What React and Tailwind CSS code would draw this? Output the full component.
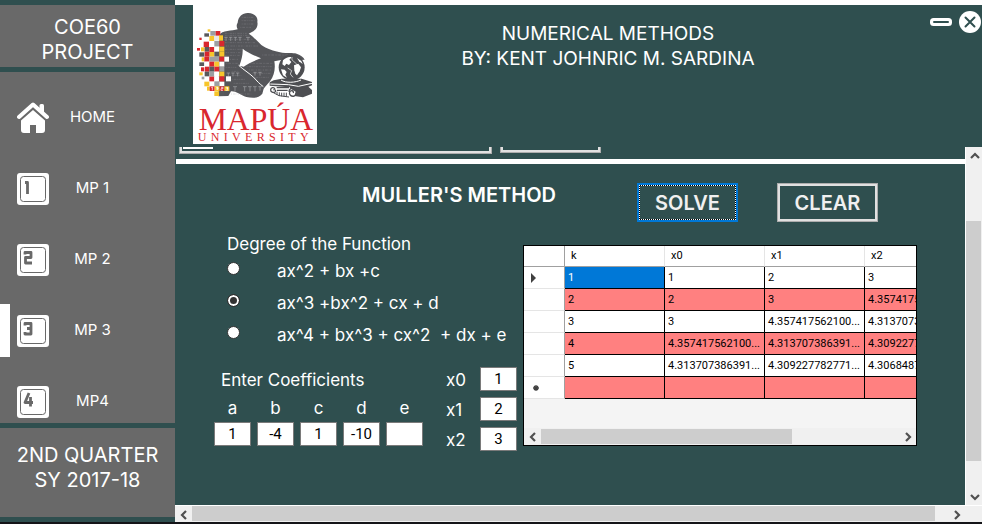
import React from "react";

const NAV = [
  { label: "HOME", icon: "home" },
  { label: "MP 1", icon: "1" },
  { label: "MP 2", icon: "2" },
  { label: "MP 3", icon: "3", active: true },
  { label: "MP4", icon: "4" },
];

const DEGREES = ["ax^2 + bx +c", "ax^3 +bx^2 + cx + d", "ax^4 + bx^3 + cx^2  + dx + e"];

const COEFFICIENTS = [
  ["a", "1"],
  ["b", "-4"],
  ["c", "1"],
  ["d", "-10"],
  ["e", ""],
];

const GUESSES = [
  ["x0", "1"],
  ["x1", "2"],
  ["x2", "3"],
];

const ROWS = [
  ["1", "1", "2", "3"],
  ["2", "2", "3", "4.357417562100..."],
  ["3", "3", "4.357417562100...", "4.313707386391..."],
  ["4", "4.357417562100...", "4.313707386391...", "4.309227782771..."],
  ["5", "4.313707386391...", "4.309227782771...", "4.306848706125..."],
  ["", "", "", ""],
];

// x, y, width, height, fill
const BLOCKS = [
  [98, 88, 8, 7, "#f7c52b"], [88, 100, 14, 10, "#58595b"], [106, 93, 16, 14, "#9d9fa2"], [122, 93, 14, 14, "#d9272e"],
  [73, 113, 7, 7, "#d9272e"], [103, 108, 15, 15, "#f7c52b"], [118, 108, 14, 14, "#e8e8e8"], [132, 106, 12, 16, "#f7c52b"],
  [86, 125, 16, 16, "#d9272e"], [102, 123, 16, 18, "#fff"], [118, 123, 15, 17, "#9d9fa2"], [133, 123, 15, 16, "#d9272e"],
  [66, 144, 9, 8, "#d9272e"], [78, 142, 11, 12, "#f7c52b"], [89, 141, 14, 14, "#58595b"], [103, 141, 15, 15, "#d9272e"], [118, 140, 15, 15, "#fff"], [133, 140, 15, 15, "#f7c52b"],
  [73, 157, 15, 13, "#58595b"], [89, 155, 15, 15, "#d9272e"], [104, 156, 14, 14, "#f7c52b"], [118, 155, 15, 15, "#58595b"], [133, 155, 15, 15, "#f7c52b"],
  [80, 172, 8, 12, "#f7c52b"], [88, 170, 15, 15, "#d9272e"], [103, 170, 30, 15, "#9d9fa2"], [133, 170, 15, 15, "#d9272e"], [148, 170, 14, 15, "#fff"],
  [73, 187, 15, 11, "#58595b"], [88, 185, 15, 15, "#fff"], [103, 185, 15, 15, "#d9272e"], [118, 185, 15, 15, "#f7c52b"], [133, 185, 15, 15, "#fff"],
  [78, 202, 10, 12, "#d9272e"], [90, 200, 13, 15, "#d9272e"], [103, 200, 15, 15, "#58595b"], [118, 200, 15, 15, "#d9272e"], [133, 200, 15, 15, "#9d9fa2"],
  [73, 217, 10, 9, "#f7c52b"], [89, 215, 14, 14, "#58595b"], [103, 215, 15, 15, "#9d9fa2"], [118, 215, 15, 15, "#fff"], [133, 215, 15, 15, "#f7c52b"],
  [80, 230, 8, 8, "#9d9fa2"], [103, 230, 15, 14, "#d9272e"], [118, 230, 15, 15, "#fff"], [133, 229, 15, 16, "#d9272e"], [153, 229, 15, 15, "#fff"],
  [88, 245, 15, 14, "#f7c52b"], [118, 244, 15, 15, "#9d9fa2"], [133, 245, 15, 14, "#fff"],
  [96, 260, 8, 12, "#f7c52b"], [104, 259, 15, 14, "#d9272e"], [119, 259, 15, 14, "#f7c52b"], [134, 259, 14, 14, "#d9272e"], [148, 259, 15, 14, "#f7c52b"],
  [118, 274, 15, 14, "#f7c52b"], [133, 275, 14, 13, "#58595b"],
];

function MapuaLogo() {
  return (
    <svg viewBox="54 15 372 417" className="h-[139px] w-[124px] shrink-0 bg-white" role="img" aria-label="Mapua University">
      <path
        fill="#55565a"
        d="M188 88C184 80 184 74 188 68C190 50 202 39 218 39C236 38 250 50 247 66C250 78 243 88 235 94L221 101C236 110 246 124 259 135C274 146 294 153 322 158C340 160 352 157 365 161C378 166 386 171 389 179L377 180C365 172 345 175 322 179L298 184C302 206 297 228 286 242C278 251 272 258 266 266L262 281C250 297 230 294 214 291C196 284 180 272 168 274L160 288L130 289L133 106C140 90 172 94 188 88Z"
      />
      <g stroke="#9b9ca0" strokeWidth="2" strokeOpacity="0.45" fill="none">
        <path strokeDasharray="5 3 2 4 7 2" d="M150 100H215M150 106H220M146 118H232M150 128H240M152 138H250M150 148H200M152 158H198M150 166H194" />
        <path strokeDasharray="3 3 8 3 2 2" d="M200 72H238M196 82H228M200 62H240M200 52H236M165 178H190M154 190H188M152 202H184M170 214H192M172 226H200M170 238H212M176 250H222M168 282H230M215 200H290M222 210H290M230 220H286M236 232H282M226 190H294M262 165H350" />
      </g>
      <g stroke="#b9babd" strokeWidth="1.500" fill="none">
        <path d="M148 112h10M153 112v11M162 112h10M167 112v11M176 112h10M181 112v11M190 112h10M195 112v11M213 112h12M219 112v10" />
        <path d="M174 260h12M180 260v14M204 260h11M209 260v14M219 260h11M225 260v14M234 260h11M240 260v14M250 260h11M255 260v12" />
        <path d="M155 219h10M160 219v10M169 219h10M174 219v10M183 219h10M188 219v10M235 217h10M240 217v10M250 217h10M255 217v10" />
      </g>
      <path fill="#fff" d="M203 146C215 156 236 166 258 175C240 181 220 191 206 200L193 197C200 180 204 162 203 146Z" />
      <path fill="none" stroke="#fff" strokeWidth="3" d="M191 196C204 208 222 219 236 232C246 243 254 252 265 260" />
      {BLOCKS.map(([x, y, w, h, fill]) => (
        <rect key={`${x}-${y}`} x={x} y={y} width={w} height={h} fill={fill} />
      ))}
      <path stroke="#fff" strokeWidth="2" fill="none" d="M109 263l3-2v10M123 263h6v4h-6M128 261v9M138 262h6v4h-6v5h6M152 262h6v4h-4M158 262v9h-6" />

      <circle cx="350" cy="202" r="39" fill="#4d4e52" />
      <path fill="#fff" d="M324 181C331 173 343 169 350 172L343 179L349 186L342 195L334 191L329 198L322 193Z" />
      <path fill="#fff" d="M357 196L370 191L378 202L374 214L366 226L361 221L358 211Z" />
      <path fill="#fff" d="M318 208L329 209L335 216L331 224L336 233L324 226Z" />
      <path fill="#fff" d="M366 174L379 183L383 192L372 184Z" />
      <path fill="none" stroke="#fff" strokeWidth="2" d="M352 172C346 182 362 186 368 196M338 204L350 212L346 222L354 232" />

      <path fill="#4d4e52" d="M296 241L320 236L380 236L411 246V256L400 260L411 270V281L384 292L358 288L362 275L340 262L284 257V247Z" />
      <path fill="none" stroke="#fff" strokeWidth="3" d="M286 252L340 254L370 259L411 250M318 240C332 250 362 248 378 240" />
      <path fill="#fff" d="M302 262H345V277H306Z" />
      <g fill="none" stroke="#4d4e52" strokeWidth="4">
        <path d="M300 267c-3-6-12-5-13 2c-1 7 8 11 14 6c3-4-2-8-6-5M305 263H342M306 271H338" />
        <path d="M342 275c-1-9 10-13 17-9c9 5 8 18-1 22c-9 3-17-4-14-12c3-6 13-5 11 3" />
        <path strokeWidth="3" d="M295 278L312 287L342 291M306 275v10M313 277v11M320 278v11M327 278v12M334 278v12" />
      </g>

      <text x="71" y="389" fontSize="95" fill="#d9272e" className="font-['Liberation_Serif',serif]">
        MAPÚA
      </text>
      <text x="68" y="424" fontSize="36" fill="#d9272e" className="font-['Liberation_Serif',serif] tracking-[13px]">
        UNIVERSITY
      </text>
    </svg>
  );
}

function HomeIcon() {
  return (
    <svg viewBox="0 0 32 32" className="size-8 shrink-0" aria-hidden="true">
      <path d="M2 15L16 2.500L30 15" fill="none" stroke="#fff" strokeWidth="4" strokeLinecap="round" strokeLinejoin="round" />
      <path d="M22.500 3.500a1.500 1.500 0 0 1 1.500-1.500h1.500a1.500 1.500 0 0 1 1.500 1.500V11l-4.500-4Z" fill="#fff" />
      <path d="M16 8L28 18.500V28a3 3 0 0 1-3 3H19v-8h-6v8H7a3 3 0 0 1-3-3V18.500Z" fill="#fff" />
    </svg>
  );
}

const DIGIT_STROKES = {
  1: "M8 9.500H10.500V21",
  2: "M8 10.500V8.500H14V13.500H8.500V19H15",
  3: "M8 10.500V8.500H14V19H8V17M10 13.500H14",
  4: "M12 7L8 16.500H16M13.500 11V20.500",
};

function KeyIcon({ digit }) {
  return (
    <svg viewBox="0 0 32 32" className="size-8 shrink-0" aria-hidden="true">
      <rect width="32" height="32" rx="3" fill="#fff" />
      <rect x="3.500" y="3.500" width="25" height="25" rx="3" fill="none" stroke="#696969" strokeWidth="1" />
      <path d={DIGIT_STROKES[digit]} fill="none" stroke="#696969" strokeWidth="2.800" strokeLinejoin="round" />
    </svg>
  );
}

const ARROWS = {
  up: "M2 8L6 4L10 8",
  down: "M2 4L6 8L10 4",
  left: "M8 2L4 6L8 10",
  right: "M4 2L8 6L4 10",
};

function ArrowButton({ direction }) {
  return (
    <button type="button" aria-label={`Scroll ${direction}`} className="flex size-[17px] shrink-0 items-center justify-center">
      <svg viewBox="0 0 12 12" className="size-3" aria-hidden="true">
        <path d={ARROWS[direction]} fill="none" stroke="#505050" strokeWidth="2.200" />
      </svg>
    </button>
  );
}

function Sidebar() {
  return (
    <aside className="flex w-[175px] shrink-0 flex-col gap-[5px] bg-[#2f4f4f] py-[5px]">
      <h2 className="h-[62px] bg-[#696969] pt-[10px] text-center text-[20px] leading-[25px]">
        COE60
        <br />
        PROJECT
      </h2>
      <nav className="flex min-h-0 flex-1 flex-col gap-[18px] overflow-hidden bg-[#696969] pt-[19px]">
        {NAV.map(({ label, icon, active }) => (
          <button
            key={label}
            type="button"
            className={`flex h-[53px] shrink-0 items-center border-l-10 pl-[7px] text-[15px] ${active ? "border-white" : "border-transparent"}`}
          >
            {icon === "home" ? <HomeIcon /> : <KeyIcon digit={icon} />}
            <span className="w-[87px] text-center">{label}</span>
          </button>
        ))}
      </nav>
      <p className="h-[89px] bg-[#696969] pt-[15px] text-center text-[20px] leading-[25px]">
        2ND QUARTER
        <br />
        SY 2017-18
      </p>
    </aside>
  );
}

function Header() {
  return (
    <header className="flex h-[142px] shrink-0 pl-[18px]">
      <MapuaLogo />
      <h1 className="flex-1 pt-4 text-center text-[19px] leading-[25px]">
        NUMERICAL METHODS
        <br />
        BY: KENT JOHNRIC M. SARDINA
      </h1>
      <div className="flex h-[34px] w-[83px] items-center justify-end gap-[7px] pr-px">
        <button type="button" aria-label="Minimize">
          <svg viewBox="0 0 22 8" className="h-2 w-[22px]" aria-hidden="true">
            <rect width="22" height="8" rx="3.500" fill="#fff" />
            <rect x="3" y="3" width="16" height="2" rx="1" fill="#2f4f4f" />
          </svg>
        </button>
        <button type="button" aria-label="Close">
          <svg viewBox="0 0 22 22" className="size-[22px]" aria-hidden="true">
            <circle cx="11" cy="11" r="11" fill="#fff" />
            <path d="M6.500 6.500L15.500 15.500M15.500 6.500L6.500 15.500" stroke="#2f4f4f" strokeWidth="2" strokeLinecap="round" />
          </svg>
        </button>
      </div>
    </header>
  );
}

function MethodForm() {
  return (
    <form className="w-[303px] shrink-0 text-[17px]">
      <fieldset className="pl-[13px]">
        <legend className="h-[23px] leading-[25px]">Degree of the Function</legend>
        {DEGREES.map((text, i) => (
          <label key={text} className="flex h-8 items-start gap-[37px] pt-[7px] leading-[18px] whitespace-pre">
            <input
              type="radio"
              name="degree"
              defaultChecked={i === 1}
              className="size-[13px] shrink-0 appearance-none rounded-full border border-[#333333] bg-white checked:bg-[#333333] checked:shadow-[inset_0_0_0_2px_white]"
            />
            {text}
          </label>
        ))}
      </fieldset>
      <div className="mt-4 flex justify-between">
        <fieldset>
          <legend className="h-[27px] pl-[7px] leading-[27px]">Enter Coefficients</legend>
          <div className="flex gap-[6px]">
            {COEFFICIENTS.map(([name, value]) => (
              <label key={name} className="flex w-[37px] flex-col text-center">
                <span className="h-7 leading-7">{name}</span>
                <input
                  defaultValue={value}
                  className="h-6 w-full border border-[#7a7a7a] bg-white text-center font-['Roboto',sans-serif] text-[15px] text-black"
                />
              </label>
            ))}
          </div>
        </fieldset>
        <div className="flex flex-col gap-[6px]">
          {GUESSES.map(([name, value]) => (
            <label key={name} className="flex h-6 w-[71px] items-center justify-between">
              <span className="pt-1">{name}</span>
              <input
                defaultValue={value}
                className="h-6 w-[37px] border border-[#7a7a7a] bg-white text-center font-['Roboto',sans-serif] text-[15px] text-black"
              />
            </label>
          ))}
        </div>
      </div>
    </form>
  );
}

function cellColor(row, col) {
  if (row === 0 && col === 0) return "bg-[#0078d7] text-white";
  return row % 2 ? "bg-[#ff8080]" : "bg-white";
}

function ResultGrid() {
  return (
    <div className="mt-[13px] mr-12 ml-[6px] h-[201px] min-w-0 flex-1 overflow-hidden border border-black bg-[#f4f4f4] text-black">
      <div className="flex h-full flex-col">
        <div className="min-h-0 flex-1 overflow-hidden">
          <table className="w-[441px] table-fixed border-separate border-spacing-0 bg-white font-['Roboto',sans-serif] text-[11px] leading-[21px]">
            <thead>
              <tr className="h-[21px]">
                <th className="w-[41px] border-r border-b border-[#a0a0a0] p-0" />
                {["k", "x0", "x1", "x2"].map((name) => (
                  <th key={name} className="w-[100px] border-r border-b border-r-[#e5e5e5] border-b-[#a0a0a0] p-0 pl-[6px] text-left leading-5 font-normal">
                    {name}
                  </th>
                ))}
              </tr>
            </thead>
            <tbody>
              {ROWS.map((cells, row) => (
                <tr key={row} className="h-[22px]">
                  <th className="border-r border-b border-r-[#a0a0a0] border-b-[#e5e5e5] p-0">
                    {row === 0 && (
                      <svg viewBox="0 0 5 10" className="ml-[7px] h-[10px] w-[5px]" aria-hidden="true">
                        <path d="M0 0L5 5L0 10Z" fill="#404040" />
                      </svg>
                    )}
                    {row === 5 && (
                      <svg viewBox="0 0 6 6" className="ml-[9px] size-[6px]" aria-hidden="true">
                        <path d="M3 0V6M0 3H6M1 1L5 5M5 1L1 5" stroke="#404040" strokeWidth="1.300" />
                      </svg>
                    )}
                  </th>
                  {cells.map((text, col) => (
                    <td key={col} className={`border-r border-b border-black p-0 pl-[3px] whitespace-nowrap ${cellColor(row, col)}`}>
                      {text}
                    </td>
                  ))}
                </tr>
              ))}
            </tbody>
          </table>
        </div>
        <div className="flex h-[17px] shrink-0 bg-[#f0f0f0]">
          <ArrowButton direction="left" />
          <div className="flex flex-1 py-px">
            <div className="w-[70%] bg-[#cdcdcd]" />
          </div>
          <ArrowButton direction="right" />
        </div>
      </div>
    </div>
  );
}

function Workspace() {
  return (
    <div className="flex min-h-0 min-w-0 flex-1 flex-col overflow-hidden pl-px">
      <div className="flex h-3 shrink-0 items-start gap-2 pl-[3px]">
        <div className="h-[7px] w-[313px] border border-t-0 border-[#adadad]">
          <div className="h-[6px] border-2 border-t-0 border-[#e1e1e1] pl-px">
            <div className="h-[2px] w-[30px] bg-white" />
          </div>
        </div>
        <div className="h-[6px] w-[101px] border border-t-0 border-[#adadad]">
          <div className="h-[5px] border-2 border-t-0 border-[#e1e1e1]" />
        </div>
      </div>
      <div className="h-[5px] shrink-0 bg-white" />
      <div className="flex items-start justify-end pt-[19px] pr-[87px] text-[20px] font-semibold">
        <h2 className="mr-[81px] leading-6">MULLER'S METHOD</h2>
        <button type="button" className="mr-[39px] h-[39px] w-[101px] border-2 border-[#0078d7] text-[#f0f0f0]">
          <span className="flex h-full border border-dotted border-white bg-black">
            <span className="flex flex-1 items-center justify-center bg-[#2f4f4f]">SOLVE</span>
          </span>
        </button>
        <button type="button" className="h-[39px] w-[101px] border border-[#adadad] text-[#f0f0f0]">
          <span className="flex h-full items-center justify-center border-2 border-[#e1e1e1]">CLEAR</span>
        </button>
      </div>
      <div className="mt-[10px] flex items-start pl-[38px]">
        <MethodForm />
        <ResultGrid />
      </div>
    </div>
  );
}

export default function App() {
  return (
    <div className="flex h-screen flex-col border-b-2 border-[#141418] font-['Inter',sans-serif] text-white">
      <div className="flex min-h-0 flex-1">
        <Sidebar />
        <main className="flex min-w-0 flex-1 flex-col border-t-[5px] border-white bg-[#2f4f4f]">
          <Header />
          <div className="flex min-h-0 flex-1">
            <Workspace />
            <div className="flex w-[17px] shrink-0 flex-col border-l border-white bg-[#f0f0f0]">
              <ArrowButton direction="up" />
              <div className="flex flex-1 flex-col pt-[57px] pr-px pb-[27px]">
                <div className="flex-1 bg-[#cdcdcd]" />
              </div>
              <ArrowButton direction="down" />
            </div>
          </div>
          <div className="flex h-[17px] shrink-0 border-t border-white bg-[#f0f0f0] pr-[17px]">
            <ArrowButton direction="left" />
            <div className="flex flex-1 pr-[13px] pb-px">
              <div className="flex-1 bg-[#cdcdcd]" />
            </div>
            <ArrowButton direction="right" />
          </div>
        </main>
      </div>
    </div>
  );
}
